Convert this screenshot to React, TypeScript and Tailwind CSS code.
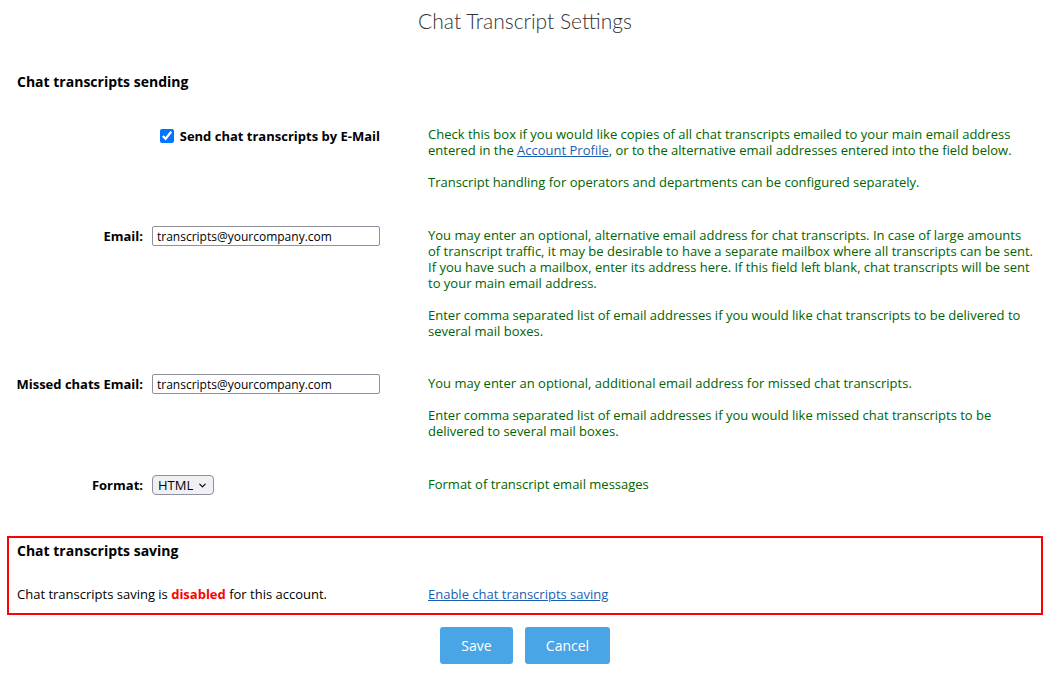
import React, { useState } from "react";
import { ChevronDown } from "lucide-react";

const font = { fontFamily: '"Open Sans", "Liberation Sans", sans-serif' };

const Row = ({
  left,
  children,
  className = "",
}: {
  left: React.ReactNode;
  children: React.ReactNode;
  className?: string;
}) => (
  <div className={`flex items-start ${className}`}>
    <div className="w-[380px] shrink-0">{left}</div>
    <div className="ml-[48px] w-[606px] text-[13px] leading-4 text-[#006400]">
      {children}
    </div>
  </div>
);

const Field = ({ label, children }: { label: string; children: React.ReactNode }) => (
  <div className="flex h-5 items-center">
    <label className="w-[143px] shrink-0 text-right text-[13px] font-bold leading-5 text-black">
      {label}
    </label>
    <div className="ml-[9px] flex">{children}</div>
  </div>
);

const TextInput = ({ value, onChange }: { value: string; onChange: (v: string) => void }) => (
  <input
    type="text"
    value={value}
    onChange={(e) => onChange(e.target.value)}
    style={font}
    className="block h-5 w-[228px] rounded-[2px] border border-[#8f8f9d] bg-white px-[4px] text-[12px] text-black outline-none"
  />
);

export default function App() {
  const [sendByEmail, setSendByEmail] = useState(true);
  const [email, setEmail] = useState("transcripts@yourcompany.com");
  const [missedEmail, setMissedEmail] = useState("transcripts@yourcompany.com");
  const [format, setFormat] = useState("HTML");

  return (
    <div style={font} className="min-h-screen w-[1050px] bg-white">
      <h1
        style={{ fontFamily: 'Lato, "Open Sans", sans-serif' }}
        className="pt-[7px] text-center text-[21px] font-light leading-7 text-[#333]"
      >
        Chat Transcript Settings
      </h1>

      <h2 className="mt-[37px] pl-[17px] text-[14px] font-bold leading-5 text-black">
        Chat transcripts sending
      </h2>

      <Row
        className="mt-[34px]"
        left={
          <div className="flex items-center justify-end">
            <input
              type="checkbox"
              checked={sendByEmail}
              onChange={(e) => setSendByEmail(e.target.checked)}
              className="m-0 h-[14px] w-[14px] accent-[#0075ff]"
            />
            <span className="ml-[6px] text-[13px] font-bold leading-5 text-black">
              Send chat transcripts by E-Mail
            </span>
          </div>
        }
      >
        <p>
          Check this box if you would like copies of all chat transcripts emailed to your main
          email address entered in the{" "}
          <a href="#" className="text-[#1a5fb4] underline">
            Account Profile
          </a>
          , or to the alternative email addresses entered into the field below.
        </p>
        <p className="mt-4">Transcript handling for operators and departments can be configured separately.</p>
      </Row>

      <Row
        className="mt-[36px]"
        left={
          <Field label="Email:">
            <TextInput value={email} onChange={setEmail} />
          </Field>
        }
      >
        <div className="pt-px">
          <p>
            You may enter an optional, alternative email address for chat transcripts. In case of
            large amounts of transcript traffic, it may be desirable to have a separate mailbox
            where all transcripts can be sent. If you have such a mailbox, enter its address here.
            If this field left blank, chat transcripts will be sent to your main email address.
          </p>
          <p className="mt-4">
            Enter comma separated list of email addresses if you would like chat transcripts to be
            delivered to several mail boxes.
          </p>
        </div>
      </Row>

      <Row
        className="mt-[35px]"
        left={
          <Field label="Missed chats Email:">
            <TextInput value={missedEmail} onChange={setMissedEmail} />
          </Field>
        }
      >
        <div className="pt-px">
          <p>You may enter an optional, additional email address for missed chat transcripts.</p>
          <p className="mt-4">
            Enter comma separated list of email addresses if you would like missed chat transcripts
            to be delivered to several mail boxes.
          </p>
        </div>
      </Row>

      <Row
        className="mt-[36px]"
        left={
          <Field label="Format:">
            <div className="relative">
              <select
                value={format}
                onChange={(e) => setFormat(e.target.value)}
                style={font}
                className="block h-5 w-[62px] appearance-none rounded-[4px] border border-[#8f8f9d] bg-[#f0f0f4] pl-[5px] text-[13px] leading-[18px] text-black outline-none"
              >
                <option>HTML</option>
                <option>Text</option>
              </select>
              <ChevronDown
                size={11}
                strokeWidth={2.5}
                className="pointer-events-none absolute right-[6px] top-[5px] text-black"
              />
            </div>
          </Field>
        }
      >
        <p className="pt-px">Format of transcript email messages</p>
      </Row>

      <div className="mx-[7px] mt-[41px] border-2 border-[#ff0000] pb-[11px] pl-[8px] pr-2 pt-[3px]">
        <h2 className="text-[14px] font-bold leading-5 text-black">Chat transcripts saving</h2>
        <div className="mt-[25px] flex text-[13px] leading-4 text-black">
          <div className="w-[411px] shrink-0">
            Chat transcripts saving is <span className="font-bold text-[#ff0000]">disabled</span> for
            this account.
          </div>
          <a href="#" className="text-[#1a5fb4] underline">
            Enable chat transcripts saving
          </a>
        </div>
      </div>

      <div className="mt-[12px] flex justify-center gap-[12px]">
        <button className="h-[37px] w-[73px] rounded-[3px] bg-[#4aa5e6] text-[14px] text-white">
          Save
        </button>
        <button className="h-[37px] w-[85px] rounded-[3px] bg-[#4aa5e6] text-[14px] text-white">
          Cancel
        </button>
      </div>
    </div>
  );
}
